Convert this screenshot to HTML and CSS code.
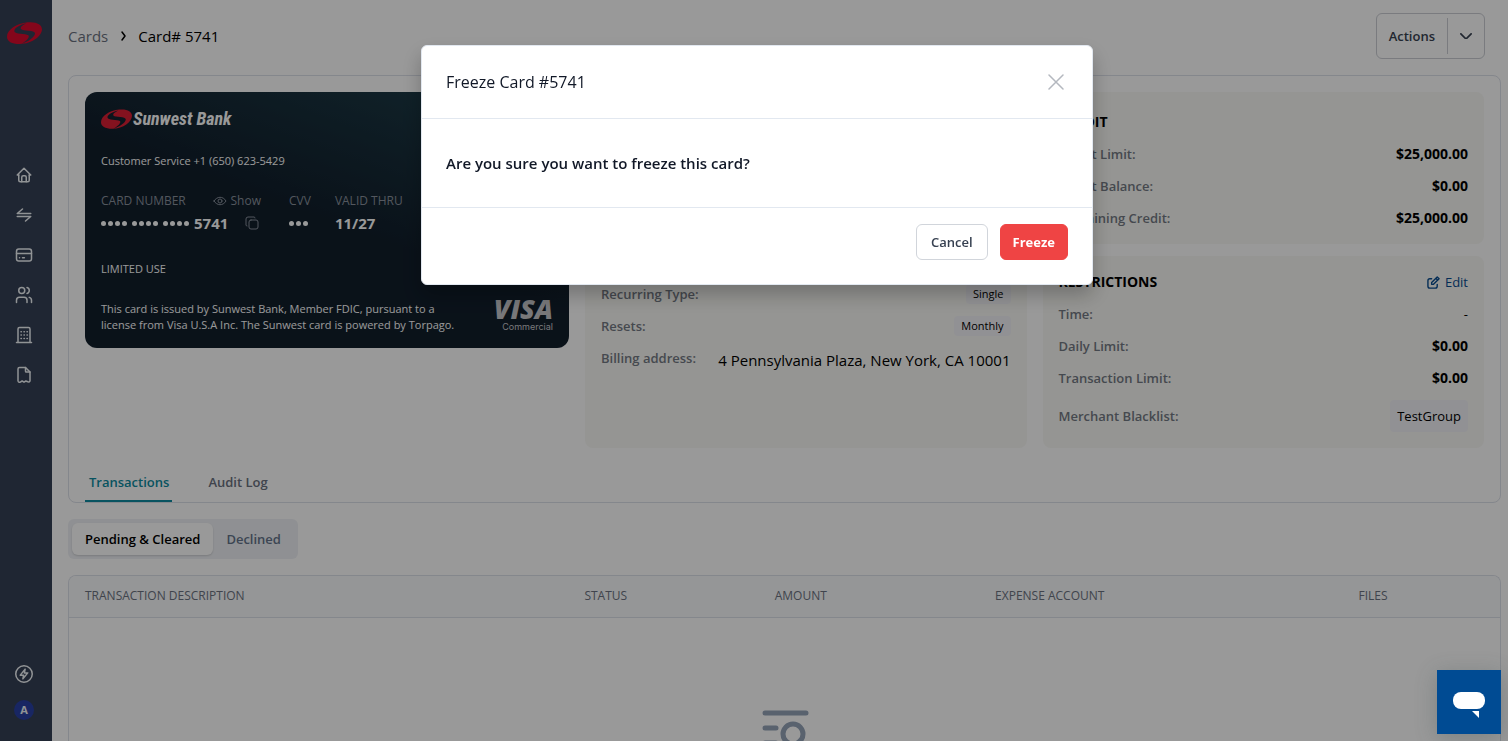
FILE: index.html
```html
<!DOCTYPE html>
<html lang="en">
<head>
    <meta charset="UTF-8">
    <meta name="viewport" content="width=device-width, initial-scale=1.0">
    <title>Card# 5741</title>
    <link rel="stylesheet" href="styles.css">
</head>
<body>

    <!-- Shared logo shape -->
    <svg class="defs" aria-hidden="true">
        <symbol id="logo-mark" viewBox="0 0 105 66">
            <path fill-rule="evenodd" d="M62 1C88-2 105 8 105 22C105 42 76 66 38 66C14 66 0 58 0 44C0 24 28 4 62 1ZM58 4C40 8 21 18 22 28C23 38 56 34 64 40C70 46 56 58 44 65C62 60 84 46 84 34C84 24 48 28 42 21C38 15 50 8 58 4Z"/>
        </symbol>
    </svg>

    <!-- Sidebar -->
    <aside class="sidebar">
        <a href="#" class="sidebar-logo" aria-label="Sunwest Bank"><svg width="35" height="22"><use href="#logo-mark"/></svg></a>
        <nav class="sidebar-nav">
            <a href="#" aria-label="Home"><svg class="icon" viewBox="0 0 24 24"><path d="M5 12H3l9-9 9 9h-2"/><path d="M5 12v7a2 2 0 0 0 2 2h10a2 2 0 0 0 2-2v-7"/><path d="M9 21v-6a2 2 0 0 1 2-2h2a2 2 0 0 1 2 2v6"/></svg></a>
            <a href="#" aria-label="Transfers"><svg class="icon" viewBox="0 0 24 24"><path d="M21 10H3l7-6"/><path d="M3 14h18l-7 6"/></svg></a>
            <a href="#" aria-label="Cards"><svg class="icon" viewBox="0 0 24 24"><rect x="2" y="4" width="20" height="16" rx="3"/><path d="M2 10h20M6 15.500h.1M10 15.500h2.500"/></svg></a>
            <a href="#" aria-label="Users"><svg class="icon" viewBox="0 0 24 24"><circle cx="9" cy="6" r="4"/><path d="M2 22v-3a4 4 0 0 1 4-4h6a4 4 0 0 1 4 4v3"/><path d="M16 2.130a4 4 0 0 1 0 7.750"/><path d="M22 22v-3a4 4 0 0 0-3-3.850"/></svg></a>
            <a href="#" aria-label="Company"><svg class="icon" viewBox="0 0 24 24"><path d="M2 22h20M4 22V4a2 2 0 0 1 2-2h12a2 2 0 0 1 2 2v18"/><path d="M8 7.500h.5M12 7.500h.5M16 7.500h.5M8 12h.5M12 12h.5M16 12h.5M8 16.500h.5M12 16.500h.5M16 16.500h.5"/></svg></a>
            <a href="#" aria-label="Statements"><svg class="icon" viewBox="0 0 24 24"><path d="M14 2v5a1 1 0 0 0 1 1h5"/><path d="M4 20V4a2 2 0 0 1 2-2h8l6 6v12a2 2 0 0 1-3 1l-2.500-1-2.500 1.500L9.500 20 7 21.500A2 2 0 0 1 4 20"/></svg></a>
        </nav>
        <div class="sidebar-bottom">
            <a href="#" aria-label="Activity"><svg class="icon" viewBox="0 0 24 24"><circle cx="12" cy="12" r="11"/><path d="M13.500 5.500L7 13.500h4.500L10.500 18.500 17 10.500h-4.500z"/></svg></a>
            <a href="#" class="avatar">A</a>
        </div>
    </aside>

    <!-- Page -->
    <main class="page">
        <header class="page-header">
            <nav class="breadcrumb">
                <a href="#">Cards</a>
                <svg class="crumb-arrow" viewBox="0 0 12 12"><path d="M5 2l3 4-3 4"/></svg>
                <span>Card# 5741</span>
            </nav>
            <button type="button" class="actions">
                <span class="actions-label">Actions</span>
                <span class="actions-arrow"><svg viewBox="0 0 14 8"><path d="M1 1l6 6 6-6"/></svg></span>
            </button>
        </header>

        <section class="overview">
            <div class="overview-grid">

                <!-- Bank card -->
                <div class="bank-card">
                    <div class="bank-logo">
                        <svg width="31" height="20"><use href="#logo-mark"/></svg>
                        <span>Sunwest Bank</span>
                    </div>
                    <p class="service">Customer Service +1 (650) 623-5429</p>
                    <div class="card-data">
                        <div class="card-number">
                            <div class="card-label">CARD NUMBER
                                <button type="button" class="show"><svg viewBox="0 0 14 10"><path d="M1 5c3-5 9-5 12 0-3 5-9 5-12 0z"/><circle cx="7" cy="5" r="2"/></svg>Show</button>
                            </div>
                            <div class="card-value">
                                <span class="dots"><i></i><i></i><i></i><i></i></span>
                                <span class="dots"><i></i><i></i><i></i><i></i></span>
                                <span class="dots"><i></i><i></i><i></i><i></i></span>
                                5741
                                <button type="button" class="copy" aria-label="Copy"><svg viewBox="0 0 14 14"><rect x="4" y="4" width="9" height="9" rx="2"/><path d="M2 10a1 1 0 0 1-1-1V3a2 2 0 0 1 2-2h6a1 1 0 0 1 1 1"/></svg></button>
                            </div>
                        </div>
                        <div class="card-cvv">
                            <div class="card-label">CVV</div>
                            <div class="card-value"><span class="dots"><i></i><i></i><i></i></span></div>
                        </div>
                        <div>
                            <div class="card-label">VALID THRU</div>
                            <div class="card-value">11/27</div>
                        </div>
                    </div>
                    <p class="usage">LIMITED USE</p>
                    <div class="card-footer">
                        <p>This card is issued by Sunwest Bank, Member FDIC, pursuant to a<br>license from Visa U.S.A Inc. The Sunwest card is powered by Torpago.</p>
                        <div class="visa"><strong>VISA</strong><span>Commercial</span></div>
                    </div>
                </div>

                <!-- Spend details -->
                <div class="panel details">
                    <div class="row"><span class="label">Recurring Type:</span><span class="tag">Single</span></div>
                    <div class="row"><span class="label">Resets:</span><span class="tag">Monthly</span></div>
                    <div class="row"><span class="label">Billing address:</span><span class="address">4 Pennsylvania Plaza, New York, CA 10001</span></div>
                </div>

                <div class="side">
                    <div class="panel credit">
                        <div class="row"><h3>CREDIT</h3></div>
                        <div class="row"><span class="label">Credit Limit:</span><b>$25,000.00</b></div>
                        <div class="row"><span class="label">Credit Balance:</span><b>$0.00</b></div>
                        <div class="row"><span class="label">Remaining Credit:</span><b>$25,000.00</b></div>
                    </div>
                    <div class="panel restrictions">
                        <div class="row">
                            <h3>RESTRICTIONS</h3>
                            <a href="#" class="edit"><svg viewBox="0 0 14 14"><path d="M5 3H3a2 2 0 0 0-2 2v6a2 2 0 0 0 2 2h6a2 2 0 0 0 2-2V9"/><path d="M5 9V7l6-6 2 2-6 6zM9.500 2.500l2 2"/></svg>Edit</a>
                        </div>
                        <div class="row"><span class="label">Time:</span><span>-</span></div>
                        <div class="row"><span class="label">Daily Limit:</span><b>$0.00</b></div>
                        <div class="row"><span class="label">Transaction Limit:</span><b>$0.00</b></div>
                        <div class="row row-tag"><span class="label">Merchant Blacklist:</span><span class="tag tag-large">TestGroup</span></div>
                    </div>
                </div>
            </div>

            <nav class="tabs">
                <a href="#" class="tab active">Transactions</a>
                <a href="#" class="tab">Audit Log</a>
            </nav>
        </section>

        <div class="segment">
            <button type="button" class="selected">Pending &amp; Cleared</button>
            <button type="button">Declined</button>
        </div>

        <div class="table-box">
            <table>
                <thead>
                    <tr>
                        <th class="col-description">Transaction description</th>
                        <th class="col-status">Status</th>
                        <th class="col-amount">Amount</th>
                        <th class="col-account">Expense account</th>
                        <th>Files</th>
                    </tr>
                </thead>
                <tbody>
                    <tr>
                        <td colspan="5" class="empty">
                            <svg viewBox="0 0 48 48"><path d="M4 5h41M4 20h11M4 35h11"/><circle cx="32" cy="26" r="10"/><path d="M39 33l6 7"/></svg>
                        </td>
                    </tr>
                </tbody>
            </table>
        </div>
    </main>

    <!-- Freeze dialog -->
    <div class="overlay">
        <div class="modal" role="dialog" aria-modal="true" aria-labelledby="modal-title">
            <div class="modal-header">
                <h2 id="modal-title">Freeze Card #5741</h2>
                <button type="button" class="close" aria-label="Close"><svg viewBox="0 0 16 16"><path d="M1 1l14 14M15 1L1 15"/></svg></button>
            </div>
            <div class="modal-body">Are you sure you want to freeze this card?</div>
            <div class="modal-footer">
                <button type="button" class="btn">Cancel</button>
                <button type="button" class="btn btn-danger">Freeze</button>
            </div>
        </div>
    </div>

    <button type="button" class="chat" aria-label="Open chat">
        <svg viewBox="0 0 32 32"><rect y="6" width="32" height="17" rx="8"/><path d="M19 25h7v7z"/></svg>
    </button>

</body>
</html>
```
FILE: styles.css
```css
* {
    box-sizing: border-box;
}

body {
    margin: 0;
    height: 100vh;
    display: flex;
    overflow: hidden;
    background: #fff;
    color: #000;
    font-family: "Segoe UI", "Open Sans", sans-serif;
    font-size: 13px;
    line-height: 24px;
}

h2, h3, p {
    margin: 0;
}

a {
    color: inherit;
    text-decoration: none;
}

button {
    font: inherit;
    color: inherit;
    background: none;
    border: none;
    padding: 0;
    cursor: pointer;
}

svg {
    display: block;
    fill: none;
    stroke: currentColor;
    stroke-linecap: round;
    stroke-linejoin: round;
}

use {
    fill: currentColor;
    stroke: none;
}

.defs {
    position: absolute;
    width: 0;
    height: 0;
}

/* Sidebar */
.sidebar {
    width: 52px;
    flex-shrink: 0;
    padding: 22px 4px 21px 0;
    display: flex;
    flex-direction: column;
    align-items: center;
    background: #354055;
    color: #f1f5f9;
}

.sidebar-logo {
    color: #dc0a2d;
}

.sidebar-nav {
    display: grid;
    gap: 22px;
    margin-top: 122px;
}

.icon {
    width: 18px;
    height: 18px;
    stroke-width: 2;
}

.sidebar-bottom {
    margin-top: auto;
    display: flex;
    flex-direction: column;
    align-items: center;
    gap: 17px;
}

.avatar {
    width: 20px;
    height: 20px;
    border-radius: 50%;
    background: #2840a5;
    font-size: 11px;
    font-weight: 700;
    line-height: 20px;
    text-align: center;
}

/* Page */
.page {
    flex: 1;
    min-width: 0;
    height: 100vh;
    display: flex;
    flex-direction: column;
    overflow: hidden;
    padding: 13px 7px 0 16px;
}

.page-header {
    display: flex;
    justify-content: space-between;
    align-items: center;
    padding-right: 16px;
    margin-bottom: 16px;
}

.breadcrumb {
    display: flex;
    align-items: center;
    gap: 9px;
    font-size: 15px;
    font-weight: 500;
}

.breadcrumb a {
    color: #6b7280;
}

.crumb-arrow {
    width: 12px;
    height: 12px;
    stroke-width: 1.5;
}

.actions {
    display: flex;
    align-items: center;
    height: 46px;
    border: 1px solid #cbced4;
    border-radius: 6px;
    color: #374151;
    font-weight: 600;
}

.actions-label {
    padding: 0 12px;
}

.actions-arrow {
    display: flex;
    align-items: center;
    height: 36px;
    padding: 0 12px;
    border-left: 1px solid #cbced4;
}

.actions-arrow svg {
    width: 12px;
    stroke-width: 2;
}

.overview {
    padding: 16px 16px 0;
    border: 1px solid #dde1ea;
    border-radius: 8px;
}

.overview-grid {
    display: grid;
    grid-template-columns: 484px 1fr 1fr;
    gap: 16px;
}

/* Bank card */
.bank-card {
    height: 256px;
    padding: 16px;
    border-radius: 12px;
    background: linear-gradient(200deg, #1e404c 0%, #111e2b 50%);
    color: #fff;
    font-size: 12px;
    line-height: 16px;
}

.bank-logo {
    display: flex;
    align-items: center;
    gap: 1px;
    height: 21px;
    color: #dc1f35;
}

.bank-logo span {
    color: #fff;
    font-family: "Liberation Sans Narrow", "Roboto Condensed", "Liberation Sans", sans-serif;
    font-size: 18px;
    font-style: italic;
    font-weight: 700;
}

.service,
.usage {
    font-size: 11px;
}

.service {
    margin-top: 24px;
}

.card-data {
    display: flex;
    margin-top: 24px;
}

.card-label {
    display: flex;
    justify-content: space-between;
    color: #8a929d;
    font-weight: 500;
}

.card-value {
    display: flex;
    align-items: center;
    gap: 5px;
    height: 28px;
    font-size: 15px;
    font-weight: 700;
}

.card-number {
    width: 160px;
    margin-right: 28px;
}

.card-cvv {
    margin-right: 24px;
}

.show {
    display: flex;
    align-items: center;
    gap: 4px;
}

.show svg {
    width: 14px;
}

.dots {
    display: flex;
    gap: 2px;
}

.dots i {
    width: 5px;
    height: 5px;
    border-radius: 50%;
    background: #fff;
}

.copy {
    margin-left: 12px;
    color: #8a929d;
}

.copy svg {
    width: 14px;
}

.usage {
    margin-top: 24px;
}

.card-footer {
    display: flex;
    justify-content: space-between;
    align-items: flex-end;
    margin-top: 20px;
    font-size: 11px;
}

.visa {
    display: flex;
    flex-direction: column;
    align-items: flex-end;
    color: #c8c8cc;
}

.visa strong {
    font-family: "Open Sans", sans-serif;
    font-size: 27px;
    font-style: italic;
    font-weight: 800;
    line-height: 24px;
}

.visa span {
    font-family: "Inter", sans-serif;
    font-size: 9px;
    line-height: 12px;
}

/* Panels */
.panel {
    display: flex;
    flex-direction: column;
    gap: 8px;
    padding: 14px 16px 16px;
    border-radius: 8px;
    background: #f9f9f5;
}

.panel h3,
.panel b {
    font-size: 14px;
    font-weight: 700;
}

.row {
    display: flex;
    justify-content: space-between;
    align-items: center;
    height: 24px;
}

.row-tag {
    height: 34px;
    padding-top: 2px;
}

.label {
    color: #747a84;
    font-weight: 600;
}

.side {
    display: flex;
    flex-direction: column;
    gap: 12px;
}

.details {
    padding-top: 190px;
}

.credit {
    padding: 18px 16px 14px;
}

.tag {
    padding: 0 7px;
    border-radius: 4px;
    background: #f2f2f7;
    font-size: 11px;
    line-height: 20px;
}

.tag-large {
    font-size: 13px;
    line-height: 32px;
}

.address {
    padding-top: 4px;
    font-size: 15px;
}

.edit {
    display: flex;
    align-items: center;
    gap: 5px;
    color: #084b8f;
}

.edit svg {
    width: 13px;
    stroke-width: 1.5;
}

.tabs {
    display: flex;
    gap: 32px;
    margin-top: 15px;
}

.tab {
    padding: 7px 3px 6px 4px;
    border-bottom: 2px solid transparent;
    color: #6b7280;
    font-weight: 600;
}

.tab.active {
    color: #0e8ba0;
    border-color: #0e8ba0;
}

/* Segmented switch */
.segment {
    display: flex;
    align-self: flex-start;
    margin: 16px 0;
    padding: 4px;
    border-radius: 6px;
    background: #eff1f5;
}

.segment button {
    padding: 4px 13px;
    border-radius: 6px;
    color: #64748b;
    font-weight: 600;
}

.segment .selected {
    background: #fff;
    color: #000;
    box-shadow: 0 1px 2px rgba(0, 0, 0, 0.15);
}

/* Table */
.table-box {
    flex: 1;
    min-height: 0;
    border: 1px solid #dde1ea;
    border-bottom: none;
    border-radius: 8px 8px 0 0;
    overflow: hidden;
}

table {
    width: 100%;
    border-collapse: collapse;
    table-layout: fixed;
}

th {
    height: 41px;
    padding: 0 16px;
    border-bottom: 1px solid #dde1ea;
    background: #f8fafc;
    color: #6b7280;
    font-size: 12px;
    font-weight: 500;
    text-align: left;
    text-transform: uppercase;
}

.col-description {
    width: 34.9%;
}

.col-status {
    width: 13.3%;
}

.col-amount {
    width: 15.4%;
}

.col-account {
    width: 25.4%;
}

.empty {
    padding: 90px 0;
    color: #94a3b8;
}

.empty svg {
    width: 48px;
    margin: 0 auto;
    stroke-width: 5;
}

/* Modal */
.overlay {
    position: fixed;
    inset: 0;
    padding: 45px 0 0 6px;
    background: rgba(0, 0, 0, 0.4);
}

.modal {
    max-width: 672px;
    margin: 0 auto;
    border: 1px solid #e2e8f0;
    border-radius: 6px;
    background: #fff;
    color: #111827;
    box-shadow: 0 10px 20px rgba(0, 0, 0, 0.25);
}

.modal-header {
    display: flex;
    justify-content: space-between;
    align-items: center;
    height: 72px;
    padding: 0 28px 0 24px;
}

.modal-header h2 {
    font-size: 16px;
    font-weight: 500;
}

.close {
    color: #b4b8bf;
}

.close svg {
    width: 16px;
    stroke-width: 1.5;
}

.modal-body {
    padding: 32px 24px;
    border-top: 1px solid #e2e8f0;
    border-bottom: 1px solid #e2e8f0;
    font-size: 15px;
    font-weight: 600;
}

.modal-footer {
    display: flex;
    justify-content: flex-end;
    gap: 12px;
    padding: 16px 24px 24px;
}

.btn {
    height: 36px;
    padding: 0 14px;
    border: 1px solid #d1d5db;
    border-radius: 6px;
    color: #374151;
    font-weight: 600;
}

.btn-danger {
    padding: 0 12px;
    border-color: #ef4444;
    background: #ef4444;
    color: #fff;
    font-weight: 700;
}

/* Chat launcher */
.chat {
    position: fixed;
    right: 7px;
    bottom: 7px;
    display: flex;
    justify-content: center;
    align-items: center;
    width: 64px;
    height: 64px;
    background: #004b93;
    color: #fff;
    box-shadow: 0 4px 20px rgba(60, 80, 80, 0.3);
}

.chat svg {
    width: 32px;
    fill: currentColor;
    stroke: none;
}
```
